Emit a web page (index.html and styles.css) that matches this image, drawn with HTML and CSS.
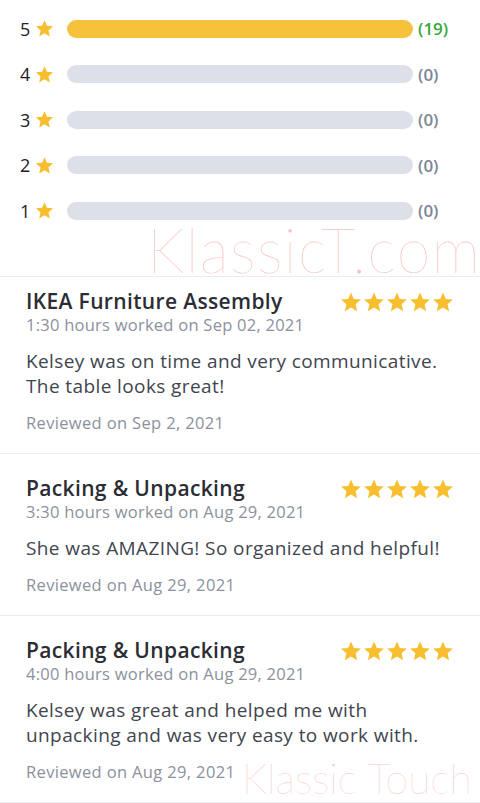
FILE: index.html
```html
<!DOCTYPE html>
<html lang="en">

<head>
    <meta charset="UTF-8">
    <meta name="viewport" content="width=device-width, initial-scale=1.0">
    <title>Reviews</title>
    <link rel="stylesheet" href="styles.css">
</head>

<body>
    <svg width="0" height="0" class="defs">
        <defs>
            <symbol id="star" viewBox="0 0 24 24">
                <path d="M12 1.5l3.1 7.1 7.7.7-5.8 5.1 1.7 7.6L12 18l-6.7 4 1.7-7.6-5.8-5.1 7.7-.7z" />
            </symbol>
        </defs>
    </svg>

    <div class="page">
        <div class="ratings">
            <div class="rating-row">
                <span class="num">5</span>
                <svg class="star-sm"><use href="#star" /></svg>
                <div class="bar"><div class="fill" style="width: 100%"></div></div>
                <span class="count green">(19)</span>
            </div>
            <div class="rating-row">
                <span class="num">4</span>
                <svg class="star-sm"><use href="#star" /></svg>
                <div class="bar"><div class="fill" style="width: 0%"></div></div>
                <span class="count">(0)</span>
            </div>
            <div class="rating-row">
                <span class="num">3</span>
                <svg class="star-sm"><use href="#star" /></svg>
                <div class="bar"><div class="fill" style="width: 0%"></div></div>
                <span class="count">(0)</span>
            </div>
            <div class="rating-row">
                <span class="num">2</span>
                <svg class="star-sm"><use href="#star" /></svg>
                <div class="bar"><div class="fill" style="width: 0%"></div></div>
                <span class="count">(0)</span>
            </div>
            <div class="rating-row">
                <span class="num">1</span>
                <svg class="star-sm"><use href="#star" /></svg>
                <div class="bar"><div class="fill" style="width: 0%"></div></div>
                <span class="count">(0)</span>
            </div>
        </div>

        <div class="review first">
            <div class="review-head">
                <div>
                    <h3>IKEA Furniture Assembly</h3>
                    <p class="meta">1:30 hours worked on Sep 02, 2021</p>
                </div>
                <div class="stars">
                    <svg><use href="#star" /></svg><svg><use href="#star" /></svg><svg><use href="#star" /></svg><svg><use href="#star" /></svg><svg><use href="#star" /></svg>
                </div>
            </div>
            <p class="body">Kelsey was on time and very communicative.<br>The table looks great!</p>
            <p class="date">Reviewed on Sep 2, 2021</p>
        </div>

        <div class="review">
            <div class="review-head">
                <div>
                    <h3>Packing &amp; Unpacking</h3>
                    <p class="meta">3:30 hours worked on Aug 29, 2021</p>
                </div>
                <div class="stars">
                    <svg><use href="#star" /></svg><svg><use href="#star" /></svg><svg><use href="#star" /></svg><svg><use href="#star" /></svg><svg><use href="#star" /></svg>
                </div>
            </div>
            <p class="body">She was AMAZING! So organized and helpful!</p>
            <p class="date">Reviewed on Aug 29, 2021</p>
        </div>

        <div class="review">
            <div class="review-head">
                <div>
                    <h3>Packing &amp; Unpacking</h3>
                    <p class="meta">4:00 hours worked on Aug 29, 2021</p>
                </div>
                <div class="stars">
                    <svg><use href="#star" /></svg><svg><use href="#star" /></svg><svg><use href="#star" /></svg><svg><use href="#star" /></svg><svg><use href="#star" /></svg>
                </div>
            </div>
            <p class="body">Kelsey was great and helped me with<br>unpacking and was very easy to work with.</p>
            <p class="date">Reviewed on Aug 29, 2021</p>
        </div>

        <div class="watermark top">KlassicT.com</div>
        <div class="watermark bottom">Klassic Touch</div>
    </div>
</body>

</html>
```

FILE: styles.css
```css
body {
    font-family: 'Open Sans', 'Lato', sans-serif;
    margin: 0;
    padding: 0;
    background-color: #fff;
    color: #2e3038;
}

.defs {
    position: absolute;
}

.page {
    position: relative;
    width: 480px;
    height: 803px;
    overflow: hidden;
}

.ratings {
    padding: 6px 0 42px 20px;
    border-bottom: 1px solid #ececef;
}

.rating-row {
    display: flex;
    align-items: center;
    height: 45.5px;
}

.num {
    width: 14px;
    font-size: 18px;
    color: #1f2026;
}

.star-sm {
    width: 19px;
    height: 19px;
    fill: #f7bf30;
    margin-left: 1px;
}

.bar {
    width: 346px;
    height: 18px;
    margin-left: 13px;
    border-radius: 9px;
    background-color: #dde0e9;
    overflow: hidden;
}

.fill {
    height: 100%;
    border-radius: 9px;
    background-color: #f7c23b;
}

.count {
    margin-left: 5px;
    font-size: 17px;
    font-weight: 600;
    color: #7c8597;
}

.count.green {
    color: #3aa83a;
}

.review {
    padding: 22px 26px 19px;
    border-bottom: 1px solid #ececef;
}

.review.first {
    padding-top: 12px;
}

.review-head {
    display: flex;
    justify-content: space-between;
    align-items: flex-start;
}

.review h3 {
    margin: 0;
    font-size: 21px;
    line-height: 24px;
    font-weight: 600;
    letter-spacing: 0.35px;
    color: #2b2d34;
}

.meta {
    margin: 1px 0 0;
    font-size: 16.5px;
    line-height: 22px;
    letter-spacing: 0.25px;
    color: #8b919d;
}

.stars {
    display: flex;
    gap: 1px;
    margin-top: 2px;
}

.stars svg {
    width: 22px;
    height: 22px;
    fill: #f7bf30;
}

.body {
    margin: 13px 0 0;
    font-size: 19px;
    line-height: 25px;
    letter-spacing: 0.4px;
    color: #41454e;
}

.date {
    margin: 13px 0 0;
    font-size: 16.5px;
    line-height: 22px;
    letter-spacing: 0.35px;
    color: #8b919d;
}

.watermark {
    position: absolute;
    color: #f9c3c3;
    font-family: 'Lato', sans-serif;
    font-weight: 100;
    line-height: 0.75;
    white-space: nowrap;
    pointer-events: none;
}

.watermark.top {
    left: 147px;
    top: 227px;
    font-size: 61px;
    letter-spacing: 1.4px;
}

.watermark.bottom {
    left: 242px;
    top: 764px;
    font-size: 41px;
}
```
